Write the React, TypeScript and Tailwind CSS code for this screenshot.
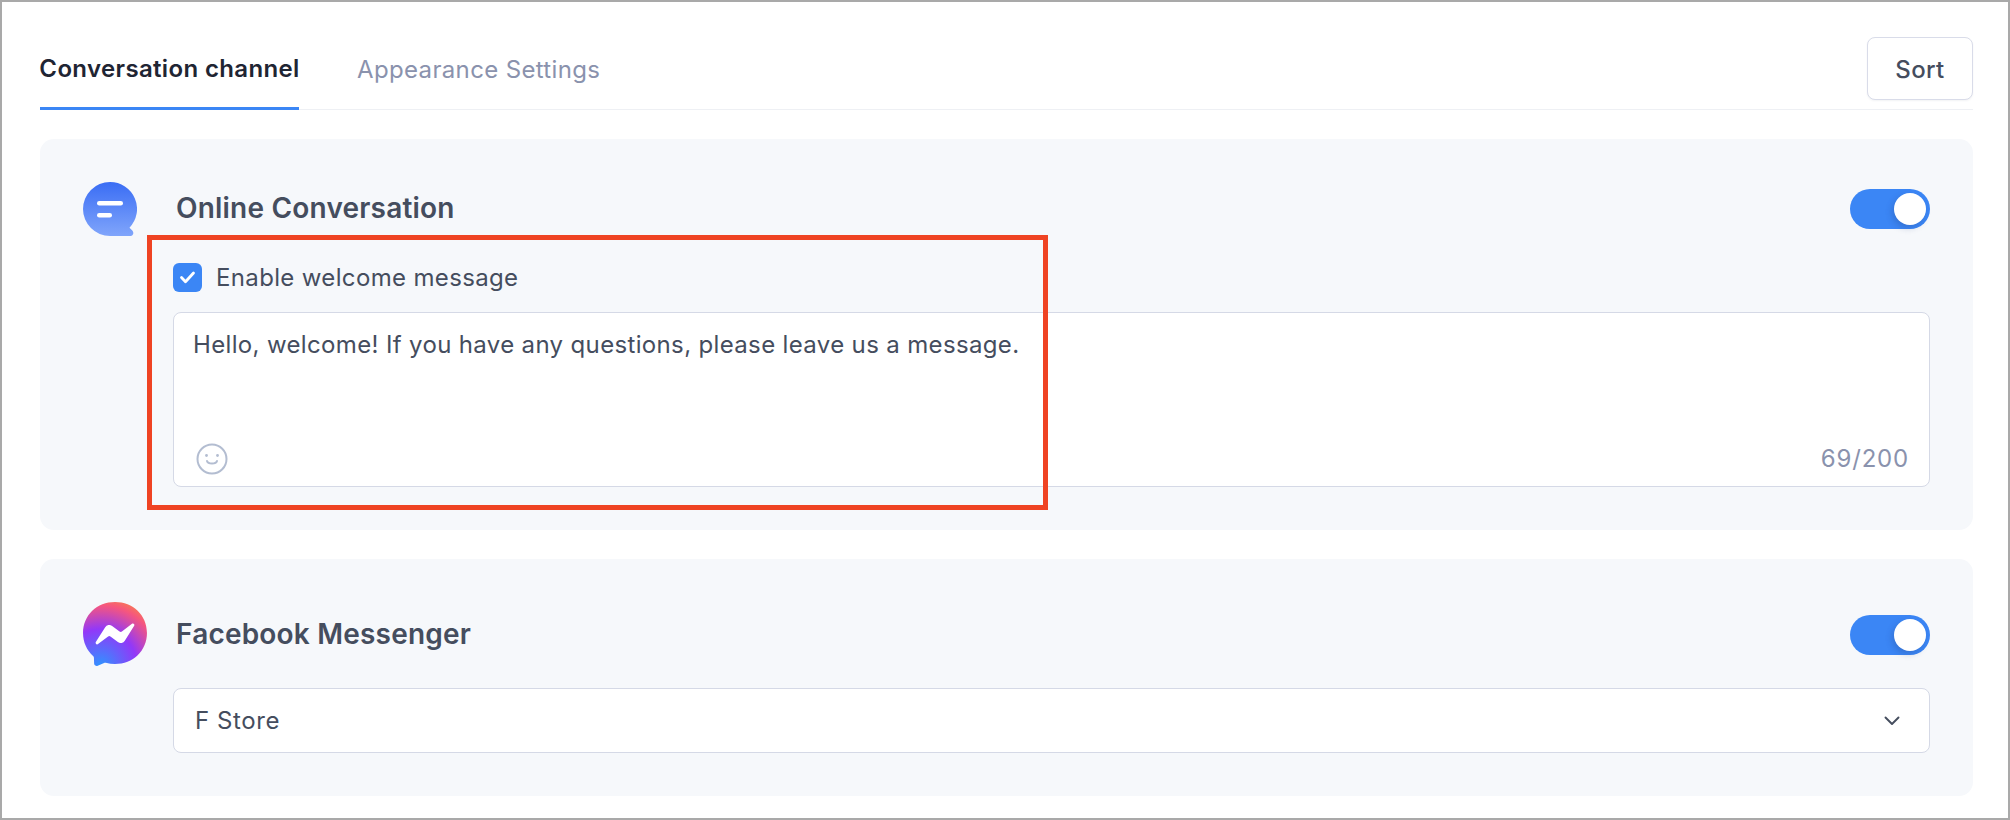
import React from 'react';

const Toggle: React.FC = () => (
  <div className="ml-auto w-20 h-10 rounded-full bg-[#3b86f5] flex items-center justify-end pr-1 shrink-0">
    <div className="w-8 h-8 rounded-full bg-white shadow-[-2px_3px_6px_rgba(30,60,120,0.25)]" />
  </div>
);

const BubbleIcon: React.FC = () => (
  <svg width="54" height="54" viewBox="0 0 54 54">
    <defs>
      <linearGradient id="bubble" x1="0" y1="0" x2="0" y2="1">
        <stop offset="0" stopColor="#3a6df4" />
        <stop offset="1" stopColor="#80a5fb" />
      </linearGradient>
    </defs>
    <path
      d="M27 0A27 27 0 0 1 46.5 45.7L49.3 48.6C51.2 50.5 50.4 54 47.5 54H27A27 27 0 0 1 27 0Z"
      fill="url(#bubble)"
    />
    <rect x="14" y="19" width="26" height="4.5" rx="2.25" fill="#fff" />
    <rect x="14" y="31" width="15" height="4.5" rx="2.25" fill="#fff" />
  </svg>
);

const MessengerIcon: React.FC = () => (
  <svg width="64" height="65" viewBox="0 0 24 24.4">
    <defs>
      <radialGradient id="messenger" cx="0.27" cy="1" r="1.05">
        <stop offset="0" stopColor="#2f93ff" />
        <stop offset="0.55" stopColor="#9238f8" />
        <stop offset="0.9" stopColor="#f5567f" />
        <stop offset="1" stopColor="#f7705f" />
      </radialGradient>
    </defs>
    <path
      d="M12 0C5.24 0 0 4.95 0 11.64c0 3.5 1.43 6.52 3.77 8.6.2.18.31.42.32.68l.07 2.14a.96.96 0 0 0 1.35.85l2.39-1.05c.2-.09.43-.1.64-.05 1.1.3 2.27.46 3.46.46 6.76 0 12-4.95 12-11.64S18.76 0 12 0z"
      fill="url(#messenger)"
    />
    <path
      d="M19.2 8.96l-3.52 5.6a1.8 1.8 0 0 1-2.6.48l-2.8-2.1a.72.72 0 0 0-.87 0l-3.78 2.87c-.5.38-1.17-.22-.83-.76l3.52-5.6a1.8 1.8 0 0 1 2.6-.48l2.8 2.1c.26.2.62.2.87 0l3.78-2.87c.5-.38 1.17.22.83.76z"
      fill="#fff"
    />
  </svg>
);

const App: React.FC = () => {
  return (
    <div className="relative w-[2010px] h-[820px] bg-white border-2 border-[#a9a9a9] pl-[38px] pr-[35px] font-['Inter',sans-serif] text-[#454d5e] tracking-[0.35px] overflow-hidden">
      {/* Tabs */}
      <div className="h-[108px] flex items-end border-b border-[#eef0f4] relative">
        <div className="w-[259px] h-[106px] border-b-[3px] border-[#3b86f5] -mb-px flex items-center justify-center pt-[27px] text-[24px] font-semibold text-[#1f2533] whitespace-nowrap">
          Conversation channel
        </div>
        <div className="ml-[58px] h-[106px] flex items-center pt-[27px] text-[24px] text-[#8a92ad] whitespace-nowrap">
          Appearance Settings
        </div>
        <button className="absolute right-0 top-[35px] w-[106px] h-[63px] pt-[2px] rounded-lg border border-[#d9dce9] bg-white shadow-[0_1px_2px_rgba(40,50,90,0.06)] text-[24px] font-medium text-[#454d5e]">
          Sort
        </button>
      </div>

      {/* Online Conversation */}
      <div className="mt-[29px] h-[391px] rounded-[14px] bg-[#f6f8fb] px-[43px] pt-[43px]">
        <div className="flex items-center h-[54px]">
          <div className="w-[93px] shrink-0">
            <BubbleIcon />
          </div>
          <div className="text-[28px] tracking-[0.2px] font-semibold whitespace-nowrap -mt-[2px]">Online Conversation</div>
          <Toggle />
        </div>
        <div className="ml-[90px]">
          <div className="mt-[27px] flex items-center h-[29px]">
            <div className="w-[29px] h-[29px] rounded-md bg-[#3b86f5] flex items-center justify-center">
              <svg width="17" height="17" viewBox="0 0 17 17" fill="none">
                <path d="M2.5 8.5l4 4.2L14.5 4" stroke="#fff" strokeWidth="2.8" strokeLinecap="round" strokeLinejoin="round" />
              </svg>
            </div>
            <span className="ml-[14px] text-[24px] whitespace-nowrap">Enable welcome message</span>
          </div>
          <div className="mt-5 h-[175px] rounded-lg border border-[#d5d9e6] bg-white pl-[19px] pr-5 flex flex-col">
            <div className="mt-[14px] text-[24px] leading-[36px] whitespace-nowrap">
              Hello, welcome! If you have any questions, please leave us a message.
            </div>
            <div className="mt-auto mb-[9px] flex items-center justify-between">
              <svg className="ml-[3px]" width="32" height="32" viewBox="0 0 32 32" fill="none" stroke="#b3bdd1">
                <circle cx="16" cy="16" r="14.5" strokeWidth="2" />
                <circle cx="10.5" cy="12.5" r="1.4" fill="#b3bdd1" stroke="none" />
                <circle cx="21.5" cy="12.5" r="1.4" fill="#b3bdd1" stroke="none" />
                <path d="M11 18c1 3.4 9 3.4 10 0" strokeWidth="2" strokeLinecap="round" />
              </svg>
              <span className="text-[24px] tracking-[0.8px] text-[#8a92ad]">69/200</span>
            </div>
          </div>
        </div>
      </div>

      {/* Facebook Messenger */}
      <div className="mt-[29px] h-[237px] rounded-[14px] bg-[#f6f8fb] px-[43px] pt-[43px]">
        <div className="flex items-center h-[65px]">
          <div className="w-[93px] shrink-0">
            <MessengerIcon />
          </div>
          <div className="text-[28px] tracking-[0.2px] font-semibold whitespace-nowrap -mt-[2px]">Facebook Messenger</div>
          <Toggle />
        </div>
        <div className="ml-[90px] mt-[21px] h-[65px] pt-[1px] rounded-lg border border-[#d5d9e6] bg-white pl-[21px] pr-[29px] flex items-center justify-between">
          <span className="text-[24px] tracking-[0.6px]">F Store</span>
          <svg width="16" height="10" viewBox="0 0 16 10" fill="none">
            <path d="M1.5 1.5L8 8l6.5-6.5" stroke="#454d5e" strokeWidth="1.9" strokeLinecap="round" strokeLinejoin="round" />
          </svg>
        </div>
      </div>

      {/* Red highlight annotation */}
      <div className="absolute left-[145px] top-[233px] w-[901px] h-[275px] border-[5px] border-[#ef4323] pointer-events-none" />
    </div>
  );
};

export default App;
